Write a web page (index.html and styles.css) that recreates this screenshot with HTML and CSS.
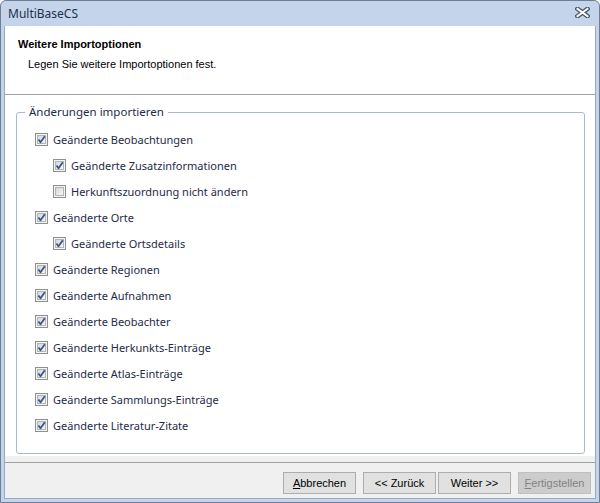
FILE: index.html
```html
<!DOCTYPE html>
<html lang="de">
  <head>
    <meta charset="UTF-8" />
    <title>MultiBaseCS</title>
    <link rel="stylesheet" href="styles.css">
  </head>
  <body>
    <svg class="defs" width="0" height="0">
      <defs>
        <linearGradient id="boxFill" x1="0" y1="0" x2="1" y2="1">
          <stop offset="0" stop-color="#d6d6d6" />
          <stop offset="1" stop-color="#f8f8f8" />
        </linearGradient>
        <symbol id="box" viewBox="0 0 13 13">
          <rect x="0.5" y="0.5" width="12" height="12" fill="#f4f4f4" stroke="#8e8f8f" />
          <rect x="2.5" y="2.5" width="8" height="8" fill="url(#boxFill)" stroke="#b4b4b4" />
        </symbol>
        <symbol id="check" viewBox="0 0 13 13">
          <use href="#box" />
          <path d="M3.5 6.5 L5.5 9.2 L9.8 3.2" fill="none" stroke="#3a5488" stroke-width="1.8" stroke-linejoin="round" />
        </symbol>
      </defs>
    </svg>

    <div class="window">
      <div class="titlebar">
        <span class="title">MultiBaseCS</span>
        <svg class="close" width="15" height="11" viewBox="0 0 15 11">
          <path d="M2.5 1.8 L12.5 9.2 M12.5 1.8 L2.5 9.2" stroke="#4f5a6a" stroke-width="4.6" stroke-linecap="square" />
          <path d="M2.5 1.8 L12.5 9.2 M12.5 1.8 L2.5 9.2" stroke="#ffffff" stroke-width="2" stroke-linecap="square" />
        </svg>
      </div>

      <div class="client">
        <div class="header">
          <h1>Weitere Importoptionen</h1>
          <p>Legen Sie weitere Importoptionen fest.</p>
        </div>

        <div class="page">
          <fieldset class="group">
            <legend>Änderungen importieren</legend>
            <label class="row"><svg class="cb"><use href="#check" /></svg>Geänderte Beobachtungen</label>
            <label class="row sub"><svg class="cb"><use href="#check" /></svg>Geänderte Zusatzinformationen</label>
            <label class="row sub"><svg class="cb"><use href="#box" /></svg>Herkunftszuordnung nicht ändern</label>
            <label class="row"><svg class="cb"><use href="#check" /></svg>Geänderte Orte</label>
            <label class="row sub"><svg class="cb"><use href="#check" /></svg>Geänderte Ortsdetails</label>
            <label class="row"><svg class="cb"><use href="#check" /></svg>Geänderte Regionen</label>
            <label class="row"><svg class="cb"><use href="#check" /></svg>Geänderte Aufnahmen</label>
            <label class="row"><svg class="cb"><use href="#check" /></svg>Geänderte Beobachter</label>
            <label class="row"><svg class="cb"><use href="#check" /></svg>Geänderte Herkunkts-Einträge</label>
            <label class="row"><svg class="cb"><use href="#check" /></svg>Geänderte Atlas-Einträge</label>
            <label class="row"><svg class="cb"><use href="#check" /></svg>Geänderte Sammlungs-Einträge</label>
            <label class="row"><svg class="cb"><use href="#check" /></svg>Geänderte Literatur-Zitate</label>
          </fieldset>
        </div>

        <div class="strip"></div>

        <div class="buttons">
          <button class="btn"><u>A</u>bbrechen</button>
          <div class="pair">
            <button class="btn">&lt;&lt; Zurück</button>
            <button class="btn">Weiter &gt;&gt;</button>
          </div>
          <button class="btn" disabled><u>F</u>ertigstellen</button>
        </div>
      </div>
    </div>
  </body>
</html>
```

FILE: styles.css
```css
/* Base */
* {
  margin: 0;
  padding: 0;
  box-sizing: border-box;
}

body {
  width: 600px;
  height: 503px;
  overflow: hidden;
  background: #ffffff;
  font-family: "Liberation Sans", Arial, sans-serif;
}

.defs {
  position: absolute;
}

/* Window frame */
.window {
  width: 600px;
  height: 503px;
  display: flex;
  flex-direction: column;
  background: #c4d5eb;
  border: 1px solid #6f7d93;
  border-radius: 6px 6px 0 0;
  padding: 0 3px 3px 3px;
}

.titlebar {
  height: 25px;
  display: flex;
  align-items: center;
  justify-content: space-between;
  padding: 0 6px 0 4px;
}

.title {
  font-family: "Noto Sans", sans-serif;
  font-size: 12px;
  color: #1e2f4c;
}

.close {
  display: block;
  margin-top: -2px;
}

/* Client area */
.client {
  flex: 1;
  display: flex;
  flex-direction: column;
  background: #ffffff;
  border: 1px solid #96a8c2;
  border-top: none;
}

.header {
  height: 69px;
  padding: 12px 0 0 13px;
  border-bottom: 1px solid #a0a0a0;
  color: #000000;
  font-size: 11px;
}

.header h1 {
  font-size: 11px;
  font-weight: bold;
  line-height: 13px;
}

.header p {
  margin: 7px 0 0 10px;
  line-height: 13px;
}

.page {
  flex: 1;
  padding: 9px 10px 2px 11px;
}

/* Group box */
.group {
  height: 100%;
  border: 1px solid #a9b8d0;
  border-radius: 3px;
  padding: 6px 0 0 18px;
  font-family: "Noto Sans", sans-serif;
  font-size: 11px;
  color: #1e2b45;
}

.group legend {
  margin-left: -10px;
  padding: 0 4px 0 4px;
  font-size: 11.5px;
  line-height: 16px;
}

.row {
  display: flex;
  align-items: center;
  height: 26px;
  gap: 5px;
}

.row.sub {
  padding-left: 18px;
}

.cb {
  width: 13px;
  height: 13px;
  flex: none;
}

/* Bottom panel */
.strip {
  height: 7px;
  background: #f0f0f0;
  border-bottom: 1px solid #a0a0a0;
}

.buttons {
  height: 35px;
  background: #f0f0f0;
  display: flex;
  align-items: flex-start;
  justify-content: flex-end;
  gap: 7px;
  padding: 9px 4px 0 0;
}

.pair {
  display: flex;
  gap: 2px;
}

.btn {
  width: 73px;
  height: 22px;
  background: #e1e1e1;
  border: 1px solid #adadad;
  font-family: "Liberation Sans", Arial, sans-serif;
  font-size: 11px;
  color: #000000;
}

.btn:disabled {
  background: #cccccc;
  border-color: #bfbfbf;
  color: #838383;
}
```
